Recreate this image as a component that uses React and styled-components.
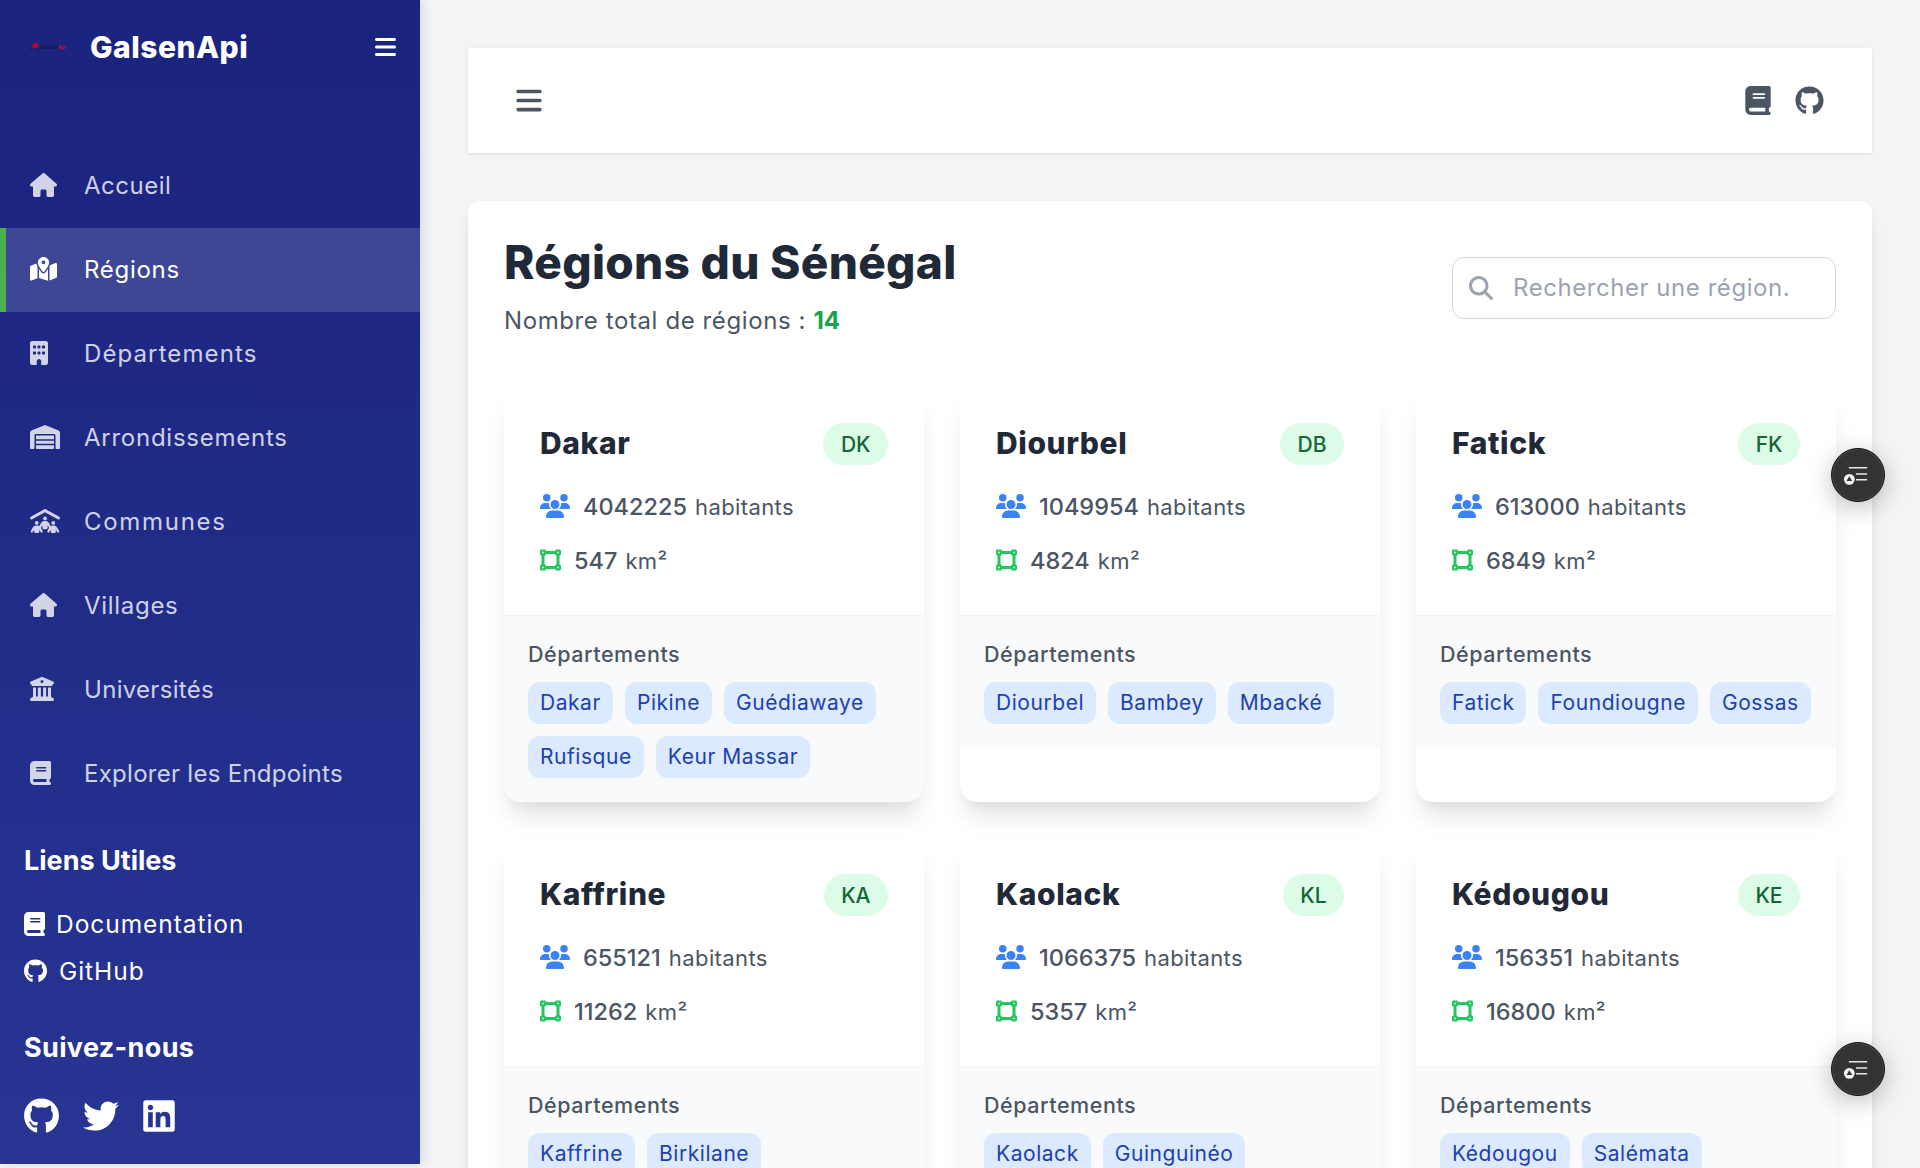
import React from "react";
import styled, { createGlobalStyle } from "styled-components";
import {
  FaHouse, FaMapLocationDot, FaBuilding, FaWarehouse, FaPeopleRoof, FaBuildingColumns, FaBook, FaBars,
  FaGithub, FaTwitter, FaLinkedin, FaMagnifyingGlass, FaUsers, FaVectorSquare,
} from "react-icons/fa6";

const Global = createGlobalStyle`
  html, body { margin: 0; padding: 0; height: 100%; overflow: hidden; background: #f3f4f6; }
  body { font-family: Inter, "Liberation Sans", sans-serif; }
  #root { height: 100%; }
  * { box-sizing: border-box; }
  svg { display: block; }
`;

const Page = styled.div`
  display: flex;
  position: relative;
  height: 1168px;
  overflow: hidden;
  background: #f3f4f6;
`;

const Glyph = styled.span`
  display: block;
  flex: none;
  width: ${(p) => p.$w}px;
  height: ${(p) => p.$h}px;
  color: ${(p) => p.$color || "inherit"};
  svg { width: 100%; height: 100%; }
`;

const Sidebar = styled.aside`
  flex: 0 0 420px;
  height: 1164px;
  background: linear-gradient(180deg, #1a237e 0%, #283593 100%);
  box-shadow: 4px 0 10px rgba(0, 0, 0, 0.1);
  color: #fff;
`;

const Brand = styled.div`
  display: flex;
  align-items: center;
  height: 94px;
  padding: 0 24px 0 30px;
`;

const Logo = styled.div`
  display: flex;
  align-items: center;
  width: 60px;
  height: 12px;
  font-family: "Liberation Sans", sans-serif;
  font-size: 5px;
  font-weight: 700;
  color: #14143c;
`;

const LogoRed = styled.span`
  color: #c8102e;
`;

const BrandName = styled.div`
  flex: 1;
  font-size: 30px;
  font-weight: 800;
  letter-spacing: 0.5px;
`;

const Nav = styled.nav`
  margin-top: 50px;
`;

const NavItem = styled.div`
  display: flex;
  align-items: center;
  height: 84px;
  padding: 0 0 2px ${(p) => (p.$active ? "24px" : "30px")};
  border-left: ${(p) => (p.$active ? "6px solid #4caf50" : "0")};
  background: ${(p) => (p.$active ? "rgba(255,255,255,0.15)" : "transparent")};
  color: ${(p) => (p.$active ? "#fff" : "rgba(255,255,255,0.8)")};
  font-size: 24px;
  letter-spacing: ${(p) => p.$spacing}px;
`;

const NavIcon = styled.span`
  flex: 0 0 54px;
`;

const Section = styled.section`
  padding: 0 24px;
`;

const SectionTitle = styled.h3`
  margin: 27px 0 0;
  font-size: 27px;
  line-height: 36px;
  font-weight: 700;
  letter-spacing: ${(p) => p.$spacing}px;
`;

const LinkList = styled.div`
  margin: 21px 0 36px;
`;

const LinkRow = styled.div`
  display: flex;
  align-items: center;
  height: 47px;
  gap: ${(p) => p.$gap}px;
  font-size: 24.5px;
  letter-spacing: 0.95px;
`;

const Socials = styled.div`
  display: flex;
  gap: 24px;
  margin-top: 32px;
`;

const Main = styled.main`
  flex: 1;
  min-width: 0;
  padding: 48px 48px 0;
`;

const Topbar = styled.header`
  display: flex;
  align-items: center;
  justify-content: space-between;
  height: 105px;
  padding: 0 48px;
  background: #fff;
  color: #4b5563;
  box-shadow: 0 1px 3px rgba(0, 0, 0, 0.1);
`;

const TopActions = styled.div`
  display: flex;
  gap: 24px;
`;

const Panel = styled.section`
  margin-top: 48px;
  padding: 36px;
  background: #fff;
  border-radius: 12px;
  box-shadow: 0 10px 15px -3px rgba(0, 0, 0, 0.1), 0 4px 6px -2px rgba(0, 0, 0, 0.05);
`;

const PanelHead = styled.div`
  display: flex;
  align-items: center;
  justify-content: space-between;
  height: 98px;
  margin-bottom: 52px;
`;

const Title = styled.h1`
  margin: -1px 0 0;
  font-size: 46px;
  line-height: 52px;
  font-weight: 800;
  color: #1f2937;
  letter-spacing: 0.3px;
`;

const Subtitle = styled.p`
  margin: 18px 0 0;
  font-size: 24px;
  line-height: 30px;
  color: #4b5563;
  letter-spacing: 0.6px;
`;

const Total = styled.strong`
  color: #16a34a;
  font-weight: 700;
  letter-spacing: 0;
`;

const Search = styled.div`
  display: flex;
  align-items: center;
  gap: 20px;
  width: 384px;
  height: 62px;
  margin-top: 3px;
  padding: 0 16px;
  border: 1px solid #d1d5db;
  border-radius: 12px;
  color: #9ca3af;
  font-size: 24px;
  letter-spacing: 0.55px;
`;

const Grid = styled.div`
  display: grid;
  grid-template-columns: repeat(3, 420px);
  gap: 36px;
`;

const Card = styled.article`
  border-radius: 18px;
  background: #fff;
  overflow: hidden;
  box-shadow: 0 20px 25px -5px rgba(0, 0, 0, 0.1), 0 10px 10px -5px rgba(0, 0, 0, 0.04);
`;

const CardBody = styled.div`
  height: 228px;
  padding: 36px 36px 0;
`;

const CardHead = styled.div`
  display: flex;
  align-items: center;
  justify-content: space-between;
  height: 42px;
`;

const CardName = styled.h2`
  margin: -2px 0 0;
  font-size: 30px;
  font-weight: 800;
  color: #1f2937;
  letter-spacing: 0.6px;
`;

const Code = styled.span`
  display: flex;
  align-items: center;
  height: 42px;
  padding: 0 17.5px;
  border-radius: 21px;
  background: #dcfce7;
  color: #166534;
  font-size: 21px;
  font-weight: 500;
`;

const Stat = styled.div`
  display: flex;
  align-items: center;
  gap: 13px;
  height: 54px;
  color: #4b5563;
`;

const StatList = styled.div`
  margin-top: 14px;
`;

const StatValue = styled.span`
  font-size: 23.5px;
  font-weight: 500;
`;

const StatUnit = styled.span`
  margin-left: 8px;
  font-size: 22px;
  letter-spacing: 0.4px;
`;

const CardFoot = styled.div`
  padding: 24px;
  background: #f9fafb;
  border-top: 1px solid #f3f4f6;
`;

const FootLabel = styled.div`
  font-size: 21.5px;
  line-height: 29px;
  font-weight: 500;
  color: #4b5563;
  letter-spacing: 0.55px;
`;

const Tags = styled.div`
  display: flex;
  flex-wrap: wrap;
  gap: 12px;
  margin-top: 13px;
`;

const Tag = styled.span`
  display: flex;
  align-items: center;
  height: 42px;
  padding: 0 12px 2px;
  border-radius: 12px;
  background: #dbeafe;
  color: #1e40af;
  font-size: 21px;
  letter-spacing: 0.55px;
`;

const Fab = styled.div`
  position: absolute;
  left: 1831px;
  top: ${(p) => p.$top}px;
  width: 54px;
  height: 54px;
  border-radius: 50%;
  background: #333;
  border: 1px solid #111;
  box-shadow: 0 0 0 1px #4a4a4a inset, 0 6px 24px rgba(0, 0, 0, 0.25);
`;

const FabIcon = () => (
  <svg viewBox="0 0 54 54" width="52" height="52">
    <path d="M17.5 19.5h19M25 26h11.5M25 32h11.5" stroke="#e8e8e8" strokeWidth="1.6" fill="none" />
    <circle cx="18" cy="31.5" r="5.6" fill="#f2f2f2" />
    <path d="M18 28.3l3 4.9h-6z" fill="#333" />
  </svg>
);

const LOGO_PIN = (
  <svg viewBox="0 0 14 14" width="11" height="11">
    <path d="M3.5 4c.6-2.6 4-3.6 6-1.6 1.2 1.4 1 3.4.6 4.6H2.4z" fill="#d0021b" />
    <path d="M1 10l2-3M10 8l1 4" stroke="#14143c" strokeWidth="1.2" />
  </svg>
);

const NAV = [
  ["Accueil", FaHouse, 27, 0.5],
  ["Régions", FaMapLocationDot, 27, 0.7, true],
  ["Départements", FaBuilding, 18, 1.1],
  ["Arrondissements", FaWarehouse, 30, 0.75],
  ["Communes", FaPeopleRoof, 30, 1.7],
  ["Villages", FaHouse, 27, 0.7],
  ["Universités", FaBuildingColumns, 24, 0.3],
  ["Explorer les Endpoints", FaBook, 21, 0.28],
];

const REGIONS = [
  ["Dakar", "DK", 4042225, 547, ["Dakar", "Pikine", "Guédiawaye", "Rufisque", "Keur Massar"]],
  ["Diourbel", "DB", 1049954, 4824, ["Diourbel", "Bambey", "Mbacké"]],
  ["Fatick", "FK", 613000, 6849, ["Fatick", "Foundiougne", "Gossas"]],
  ["Kaffrine", "KA", 655121, 11262, ["Kaffrine", "Birkilane"]],
  ["Kaolack", "KL", 1066375, 5357, ["Kaolack", "Guinguinéo"]],
  ["Kédougou", "KE", 156351, 16800, ["Kédougou", "Salémata"]],
];

export default function App() {
  return (
    <Page>
      <Global />
      <Sidebar>
        <Brand>
          <Logo>
            {LOGO_PIN}
            Galsen<LogoRed>Api</LogoRed>
          </Logo>
          <BrandName>GalsenApi</BrandName>
          <Glyph $w={21} $h={24}><FaBars /></Glyph>
        </Brand>
        <Nav>
          {NAV.map(([label, Icon, w, spacing, active]) => (
            <NavItem key={label} $active={active} $spacing={spacing}>
              <NavIcon><Glyph $w={w} $h={24}><Icon /></Glyph></NavIcon>
              {label}
            </NavItem>
          ))}
        </Nav>
        <Section>
          <SectionTitle $spacing={0}>Liens Utiles</SectionTitle>
          <LinkList>
            <LinkRow $gap={11}><Glyph $w={21} $h={24}><FaBook /></Glyph>Documentation</LinkRow>
            <LinkRow $gap={12}><Glyph $w={23} $h={24}><FaGithub /></Glyph>GitHub</LinkRow>
          </LinkList>
          <SectionTitle $spacing={0.35}>Suivez-nous</SectionTitle>
          <Socials>
            <Glyph $w={35} $h={36}><FaGithub /></Glyph>
            <Glyph $w={36} $h={36}><FaTwitter /></Glyph>
            <Glyph $w={32} $h={36}><FaLinkedin /></Glyph>
          </Socials>
        </Section>
      </Sidebar>
      <Main>
        <Topbar>
          <Glyph $w={26} $h={29}><FaBars /></Glyph>
          <TopActions>
            <Glyph $w={26} $h={29}><FaBook /></Glyph>
            <Glyph $w={29} $h={29}><FaGithub /></Glyph>
          </TopActions>
        </Topbar>
        <Panel>
          <PanelHead>
            <div>
              <Title>Régions du Sénégal</Title>
              <Subtitle>Nombre total de régions : <Total>14</Total></Subtitle>
            </div>
            <Search>
              <Glyph $w={24} $h={24}><FaMagnifyingGlass /></Glyph>
              Rechercher une région.
            </Search>
          </PanelHead>
          <Grid>
            {REGIONS.map(([name, code, pop, area, deps]) => (
              <Card key={name}>
                <CardBody>
                  <CardHead>
                    <CardName>{name}</CardName>
                    <Code>{code}</Code>
                  </CardHead>
                  <StatList>
                    <Stat>
                      <Glyph $w={30} $h={24} $color="#3b82f6"><FaUsers /></Glyph>
                      <span><StatValue>{pop}</StatValue><StatUnit>habitants</StatUnit></span>
                    </Stat>
                    <Stat>
                      <Glyph $w={21} $h={24} $color="#22c55e"><FaVectorSquare /></Glyph>
                      <span><StatValue>{area}</StatValue><StatUnit>km²</StatUnit></span>
                    </Stat>
                  </StatList>
                </CardBody>
                <CardFoot>
                  <FootLabel>Départements</FootLabel>
                  <Tags>
                    {deps.map((d) => <Tag key={d}>{d}</Tag>)}
                  </Tags>
                </CardFoot>
              </Card>
            ))}
          </Grid>
        </Panel>
      </Main>
      <Fab $top={448}><FabIcon /></Fab>
      <Fab $top={1042}><FabIcon /></Fab>
    </Page>
  );
}
